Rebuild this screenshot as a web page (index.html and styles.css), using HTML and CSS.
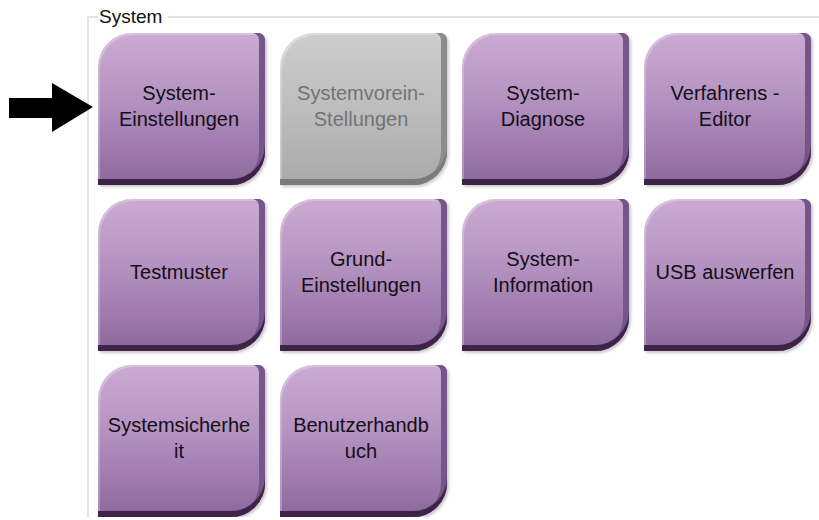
FILE: index.html
```html
<!DOCTYPE html>
<html lang="de">

<head>
	<meta charset="UTF-8">
	<meta name="viewport" content="width=device-width, initial-scale=1.0">
	<title>System</title>
	<link rel="stylesheet" href="styles.css">
</head>

<body>

	<div class="pointer">
		<svg width="84" height="50" viewBox="0 0 84 50">
			<polygon points="0,15 43,15 43,0 84,24 43,49 43,35 0,35" fill="#000" />
		</svg>
	</div>

	<fieldset class="group">
		<legend class="group__title">System</legend>

		<div class="tiles">
			<div class="tile">System-<br>Einstellungen</div>
			<div class="tile tile--off">Systemvorein-<br>Stellungen</div>
			<div class="tile">System-<br>Diagnose</div>
			<div class="tile">Verfahrens -<br>Editor</div>

			<div class="tile">Testmuster</div>
			<div class="tile">Grund-<br>Einstellungen</div>
			<div class="tile">System-<br>Information</div>
			<div class="tile">USB auswerfen</div>

			<div class="tile">Systemsicherhe<br>it</div>
			<div class="tile">Benutzerhandb<br>uch</div>
		</div>
	</fieldset>

</body>

</html>
```

FILE: styles.css
```css
body {
	margin: 0;
	background: #fff;
	font-family: "Liberation Sans", Arial, sans-serif;
	overflow: hidden;
}

.pointer {
	position: absolute;
	left: 9px;
	top: 83px;
}

.pointer svg {
	display: block;
}

.group {
	margin: 6px 0 0 87px;
	padding: 5px 0 0 9px;
	border: 2px solid #e3e3e3;
	border-right: 0;
	border-bottom: 0;
	min-width: 0;
}

.group__title {
	margin-left: 0;
	padding: 0 6px 0 1px;
	font-size: 19px;
	line-height: 22px;
	color: #111;
}

.tiles {
	display: grid;
	grid-template-columns: repeat(4, 167px);
	grid-auto-rows: 152px;
	column-gap: 15px;
	row-gap: 14px;
}

.tile {
	display: flex;
	align-items: center;
	justify-content: center;
	text-align: center;
	padding: 0 5px 6px 0;
	font-size: 20px;
	line-height: 26px;
	color: #140e16;
	border-radius: 34px 7px 34px 0;
	background: linear-gradient(180deg, #cbaad3 0%, #b998c5 35%, #a27eb1 70%, #8b689b 100%);
	box-shadow:
		inset 0 -6px 0 #3d2347,
		inset -6px 0 0 #76558a,
		inset -3px 0 0 #8c6a9e,
		inset 2px 2px 0 rgba(255, 255, 255, 0.25),
		2px 2px 3px rgba(0, 0, 0, 0.22);
}

.tile--off {
	color: #737373;
	background: linear-gradient(180deg, #cdcdcd 0%, #bdbdbd 50%, #a9a9a9 100%);
	box-shadow:
		inset 0 -6px 0 #7b7b7b,
		inset -6px 0 0 #8c8c8c,
		inset -3px 0 0 #a0a0a0,
		inset 2px 2px 0 rgba(255, 255, 255, 0.3),
		2px 2px 3px rgba(0, 0, 0, 0.2);
}
```
